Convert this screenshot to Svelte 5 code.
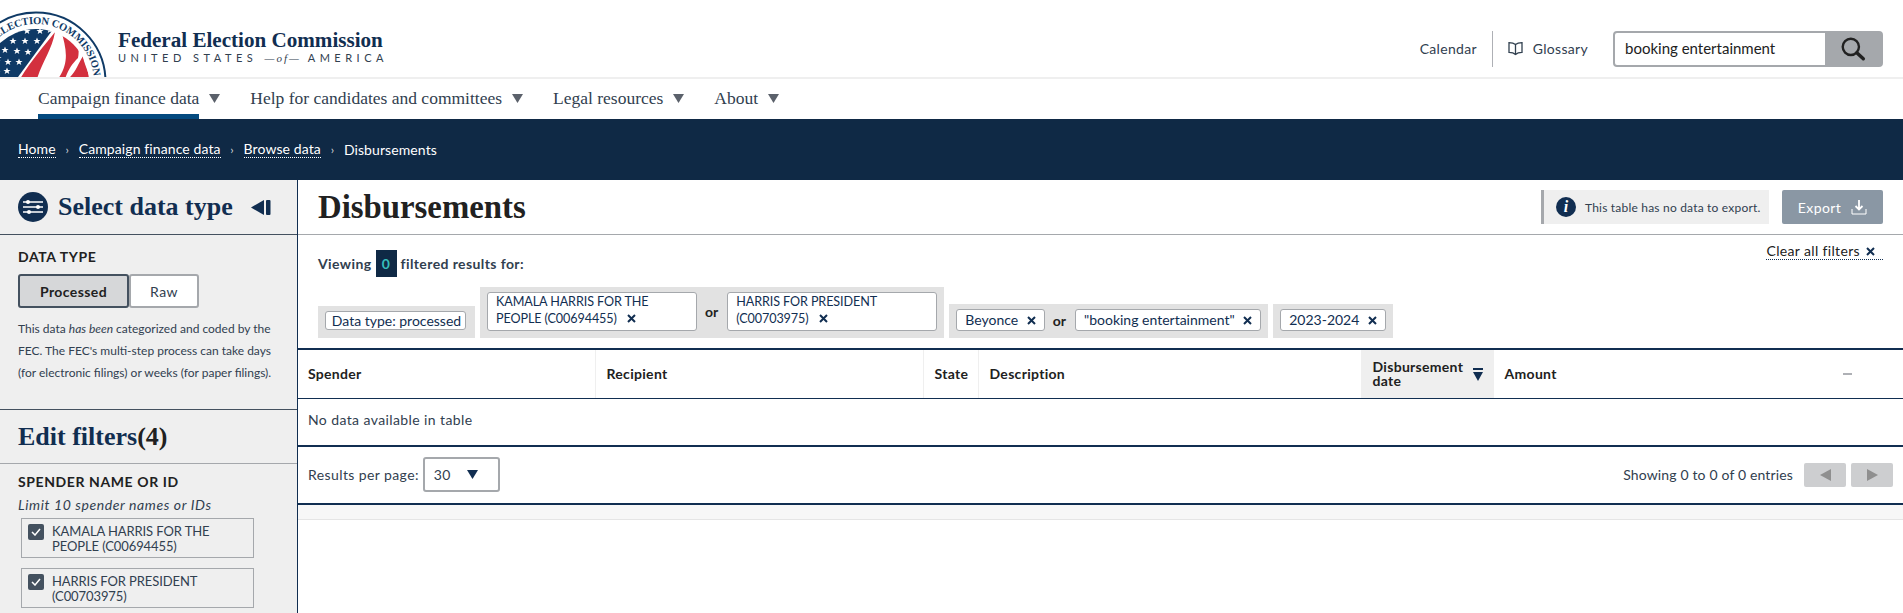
<script lang="ts">
    const navItems = [
        { label: "Campaign finance data", active: true },
        { label: "Help for candidates and committees" },
        { label: "Legal resources" },
        { label: "About" },
    ];

    const crumbs = ["Home", "Campaign finance data", "Browse data"];

    const columns = [
        { label: "Spender", width: 297 },
        { label: "Recipient", width: 328 },
        { label: "State", width: 55 },
        { label: "Description", width: 383 },
        { label: "Disbursement date", width: 132, sorted: true },
        { label: "Amount", width: 410, minus: true },
    ];

    const stars = [
        [27, 31], [40, 31], [13, 41], [25, 41], [37, 41], [5, 50], [17, 51], [28, 52],
        [8, 62], [19, 62], [7, 71], [50, 30], [-2, 58], [-3, 72],
    ];

    const starPath = "M0-3.6 1-1.1 3.6-1.1 1.5.5 2.3 3.1 0 1.6-2.3 3.1-1.5.5-3.6-1.1-1-1.1Z";
</script>

{#snippet closeIcon()}
    <svg class="x" width="9" height="9" viewBox="0 0 9 9" aria-hidden="true">
        <path d="M1 1l7 7M8 1L1 8" stroke="#112e51" stroke-width="2" fill="none" />
    </svg>
{/snippet}

{#snippet caret(cls)}
    <svg class={cls} width="11" height="9" viewBox="0 0 11 9" aria-hidden="true">
        <path d="M0 0h11L5.5 9z" />
    </svg>
{/snippet}

<div class="page">
    <header class="top">
        <svg class="seal" width="107" height="77" viewBox="0 0 107 77" aria-hidden="true">
            <defs>
                <clipPath id="inner"><circle cx="36" cy="82" r="53" /></clipPath>
                <path id="arc" d="M-22 82a58 58 0 0 1 116 0" />
            </defs>
            <circle cx="36" cy="82" r="69.5" fill="#fff" stroke="#0f3a66" stroke-width="2" />
            <text class="seal-text"><textPath href="#arc" startOffset="27%" textLength="127">ELECTION COMMISSION</textPath></text>
            <g clip-path="url(#inner)">
                <rect x="-20" y="25" width="120" height="60" fill="#fff" />
                <path d="M54 28L18 77h-40V28z" fill="#0f3a66" />
                {#each stars as [x, y]}
                    <path d={starPath} transform="translate({x} {y})" fill="#fff" />
                {/each}
                <path d="M55 32C52 50 42 62 37 79H20C30 62 44 46 55 32Z" fill="#d3303e" />
                <path d="M61 30C78 34 80 48 78 58 72 64 68 70 65 79H58C70 62 66 48 61 30Z" fill="#d3303e" />
                <path d="M83 56C84 64 88 70 90 79H68C76 72 78 64 83 56Z" fill="#d3303e" />
            </g>
        </svg>
        <div class="brand">
            <div class="brand-name">Federal Election Commission</div>
            <div class="brand-sub">UNITED STATES <i>—of—</i> AMERICA</div>
        </div>
        <div class="tools">
            <span class="tool cal">Calendar</span>
            <span class="tool gloss">
                <svg width="15" height="15" viewBox="0 0 15 15" aria-hidden="true">
                    <path d="M7.5 3.5C6 2.2 3.5 1.6 1 1.6v9.8c2.500 0 5 .6 6.500 2 1.500-1.400 4-2 6.500-2V1.600c-2.500 0-5 .6-6.500 1.900zM7.500 3.500v9.900" fill="none" stroke="#31404f" stroke-width="1.300" />
                </svg>
                Glossary
            </span>
            <div class="search">
                <span class="search-text">booking entertainment</span>
                <span class="search-btn">
                    <svg width="26" height="26" viewBox="0 0 24 24" aria-hidden="true">
                        <circle cx="10" cy="10" r="7.500" fill="none" stroke="#212121" stroke-width="2.200" />
                        <path d="M15.500 15.500l6 5.500" stroke="#212121" stroke-width="3.200" stroke-linecap="round" />
                    </svg>
                </span>
            </div>
        </div>
    </header>

    <nav class="mainnav">
        {#each navItems as item}
            <span class="nav-item" class:active={item.active}>
                {item.label}
                {@render caret("nav-caret")}
            </span>
        {/each}
    </nav>

    <div class="band">
        {#each crumbs as crumb}
            <span class="crumb">{crumb}</span><span class="sep">›</span>
        {/each}
        <span class="current">Disbursements</span>
    </div>

    <div class="body">
        <aside class="side">
            <div class="side-head">
                <svg class="filter-icon" width="30" height="30" viewBox="0 0 30 30" aria-hidden="true">
                    <circle cx="15" cy="15" r="15" fill="#112e51" />
                    <path d="M5 10h20M5 15h20M5 20h20" stroke="#fff" stroke-width="1.500" />
                    <circle cx="10" cy="10" r="2" fill="#fff" />
                    <circle cx="20" cy="15" r="2" fill="#fff" />
                    <circle cx="11" cy="20" r="2" fill="#fff" />
                </svg>
                <h2 class="side-title">Select data type</h2>
                <svg class="collapse" width="20" height="15" viewBox="0 0 20 15" aria-hidden="true">
                    <path d="M13 0v15L0 7.500z" fill="#112e51" />
                    <rect x="15" y="0" width="4.500" height="15" rx="1" fill="#112e51" />
                </svg>
            </div>
            <div class="side-type">
                <div class="label">DATA TYPE</div>
                <div class="toggle">
                    <span class="toggle-on">Processed</span>
                    <span class="toggle-off">Raw</span>
                </div>
                <p class="type-note">This data <em>has been</em> categorized and coded by the FEC. The FEC's multi-step process can take days (for electronic filings) or weeks (for paper filings).</p>
            </div>
            <div class="edit-head">
                <h2 class="edit-title">Edit filters<span>(4)</span></h2>
            </div>
            <div class="side-filter">
                <div class="label">SPENDER NAME OR ID</div>
                <div class="limit">Limit 10 spender names or IDs</div>
                <label class="check-row">
                    <span class="box">
                        <svg width="10" height="8" viewBox="0 0 10 8" aria-hidden="true"><path d="M1 4l3 3 5-6" fill="none" stroke="#fff" stroke-width="1.500" /></svg>
                    </span>
                    <span>KAMALA HARRIS FOR THE PEOPLE (C00694455)</span>
                </label>
                <label class="check-row">
                    <span class="box">
                        <svg width="10" height="8" viewBox="0 0 10 8" aria-hidden="true"><path d="M1 4l3 3 5-6" fill="none" stroke="#fff" stroke-width="1.500" /></svg>
                    </span>
                    <span>HARRIS FOR PRESIDENT (C00703975)</span>
                </label>
            </div>
        </aside>

        <main class="content">
            <div class="title-row">
                <h1>Disbursements</h1>
                <div class="notice">
                    <span class="info">i</span>
                    This table has no data to export.
                </div>
                <span class="export">
                    Export
                    <svg width="16" height="16" viewBox="0 0 16 16" aria-hidden="true">
                        <path d="M8 1v9M4.500 7L8 10.500 11.500 7" fill="none" stroke="#fff" stroke-width="1.800" />
                        <path d="M1 10v5h14v-5" fill="none" stroke="#fff" stroke-width="1" />
                    </svg>
                </span>
            </div>

            <div class="results">
                <div class="viewing-row">
                    <div class="viewing">Viewing <span class="count">0</span> filtered results for:</div>
                    <span class="clear">Clear all filters {@render closeIcon()}</span>
                </div>
                <div class="tags">
                    <div class="group">
                        <span class="tag small">Data type: processed</span>
                    </div>
                    <div class="group">
                        <span class="tag wide">KAMALA HARRIS FOR THE PEOPLE (C00694455) {@render closeIcon()}</span>
                        <b>or</b>
                        <span class="tag wide">HARRIS FOR PRESIDENT (C00703975) {@render closeIcon()}</span>
                    </div>
                    <div class="group">
                        <span class="tag">Beyonce {@render closeIcon()}</span>
                        <b>or</b>
                        <span class="tag">"booking entertainment" {@render closeIcon()}</span>
                    </div>
                    <div class="group">
                        <span class="tag">2023-2024 {@render closeIcon()}</span>
                    </div>
                </div>
            </div>

            <table class="grid">
                <colgroup>
                    {#each columns as col}
                        <col style="width: {col.width}px" />
                    {/each}
                </colgroup>
                <thead>
                    <tr>
                        {#each columns as col}
                            <th class:sorted={col.sorted}>
                                <span class="th-inner">
                                    <span class="th-label">{col.label}</span>
                                    {#if col.sorted}
                                        <svg width="10" height="13" viewBox="0 0 10 13" aria-hidden="true">
                                            <path d="M0 0h10v2H0zM0 4h10l-5 9z" fill="#112e51" />
                                        </svg>
                                    {/if}
                                    {#if col.minus}
                                        <span class="minus"></span>
                                    {/if}
                                </span>
                            </th>
                        {/each}
                    </tr>
                </thead>
                <tbody>
                    <tr><td colspan="6">No data available in table</td></tr>
                </tbody>
            </table>

            <div class="pager">
                <div class="per-page">
                    Results per page:
                    <span class="select">30 {@render caret("select-caret")}</span>
                </div>
                <div class="entries">
                    Showing 0 to 0 of 0 entries
                    <span class="page-btn"><svg width="11" height="12" viewBox="0 0 11 12" aria-hidden="true"><path d="M11 0v12L0 6z" fill="#8f8f8f" /></svg></span>
                    <span class="page-btn"><svg width="11" height="12" viewBox="0 0 11 12" aria-hidden="true"><path d="M0 0v12l11-6z" fill="#8f8f8f" /></svg></span>
                </div>
            </div>
            <div class="strip"></div>
        </main>
    </div>
</div>

<style>
    :global(body) {
        margin: 0;
        background: #fff;
    }

    .page {
        height: 613px;
        overflow: hidden;
        font-family: Lato, "Liberation Sans", sans-serif;
        font-size: 14px;
        color: #212121;
    }

    .top {
        display: flex;
        height: 77px;
        border-bottom: 2px solid #efefef;
    }

    .seal {
        flex: none;
    }

    .seal-text {
        font-family: "Liberation Serif", serif;
        font-size: 10.5px;
        font-weight: 700;
        fill: #0f3a66;
    }

    .brand {
        margin: 30px 0 0 11px;
        color: #112e51;
    }

    .brand-name {
        font-family: "Liberation Serif", serif;
        font-weight: 700;
        font-size: 21.1px;
        line-height: 20px;
    }

    .brand-sub {
        margin-top: 1px;
        font-size: 11px;
        line-height: 14px;
        letter-spacing: 4.5px;
        color: #31404f;
        white-space: nowrap;
    }

    .brand-sub i {
        font-family: "Liberation Serif", serif;
        letter-spacing: 2px;
    }

    .tools {
        margin-left: auto;
        margin-right: 20px;
        display: flex;
        align-items: center;
        align-self: flex-start;
        margin-top: 31px;
        height: 36px;
    }

    .tool {
        display: flex;
        align-items: center;
        box-sizing: border-box;
        height: 100%;
        padding-bottom: 2px;
        font-size: 14px;
        letter-spacing: 0.3px;
        color: #31404f;
    }

    .cal {
        padding-right: 15px;
        border-right: 1px solid #aeb0b5;
    }

    .gloss {
        padding-left: 15px;
        gap: 10px;
        margin-right: 25px;
    }

    .search {
        display: flex;
        width: 270px;
        height: 36px;
        box-sizing: border-box;
        border: 2px solid #a5a8ac;
        border-radius: 4px;
        background: #fff;
    }

    .search-text {
        flex: 1;
        padding-left: 10px;
        line-height: 31px;
        font-size: 15px;
        color: #212121;
    }

    .search-btn {
        width: 56px;
        background: #a5a8ac;
        display: flex;
        align-items: center;
        justify-content: center;
    }

    .mainnav {
        display: flex;
        height: 40px;
        padding-left: 38px;
        gap: 30px;
        box-sizing: border-box;
    }

    .nav-item {
        display: flex;
        gap: 10px;
        align-items: center;
        position: relative;
        padding-bottom: 2px;
        box-sizing: border-box;
        font-family: "Liberation Serif", serif;
        font-size: 17.5px;
        color: #31404f;
    }

    .nav-item.active::after {
        content: "";
        position: absolute;
        left: 0;
        right: 21px;
        bottom: 0;
        height: 5px;
        background: #044a7f;
    }

    :global(.nav-caret) {
        fill: #5b616b;
    }

    .band {
        height: 61px;
        background: #0f2945;
        display: flex;
        align-items: center;
        padding-left: 18px;
        color: #fff;
        letter-spacing: 0.1px;
    }

    .crumb {
        border-bottom: 1px dotted #fff;
        line-height: 16px;
    }

    .sep {
        width: 23px;
        text-align: center;
        font-size: 12px;
        color: #d6d7d9;
    }

    .current {
        padding-bottom: 1px;
    }

    .body {
        display: grid;
        grid-template-columns: 298px 1fr;
    }

    .side {
        height: 433px;
        box-sizing: border-box;
        background: #efefef;
        border-right: 1px solid #112e51;
    }

    .side-head {
        display: flex;
        align-items: center;
        height: 54px;
        padding: 0 26px 0 18px;
        border-bottom: 1px solid #44515f;
    }

    .side-title {
        margin: 0 0 0 10px;
        font-family: "Liberation Serif", serif;
        font-size: 26px;
        color: #112e51;
        white-space: nowrap;
    }

    .collapse {
        margin-left: auto;
    }

    .side-type {
        height: 175px;
        box-sizing: border-box;
        padding: 13px 18px 0;
        border-bottom: 1px solid #44515f;
    }

    .label {
        font-weight: 700;
        font-size: 14px;
        line-height: 18px;
        letter-spacing: 0.6px;
        color: #212121;
    }

    .toggle {
        display: flex;
        margin-top: 8px;
        height: 34px;
        width: 181px;
    }

    .toggle span {
        display: flex;
        align-items: center;
        justify-content: center;
        box-sizing: border-box;
        border-radius: 3px;
        letter-spacing: 0.4px;
    }

    .toggle-on {
        width: 111px;
        background: #d6d7d9;
        border: 2px solid #44515f;
        font-weight: 700;
    }

    .toggle-off {
        width: 70px;
        background: #fff;
        border: 2px solid #a5a8ac;
        color: #31404f;
    }

    .type-note {
        margin: 10px 0 0;
        width: 262px;
        font-size: 12px;
        line-height: 22px;
        color: #31404f;
    }

    .edit-head {
        height: 54px;
        box-sizing: border-box;
        padding: 12px 18px 0;
        border-bottom: 1px solid #a5a8ac;
    }

    .edit-title {
        margin: 0;
        font-family: "Liberation Serif", serif;
        font-size: 26px;
        line-height: 30px;
        color: #112e51;
    }

    .edit-title span {
        color: #212121;
    }

    .side-filter {
        padding: 9px 18px 0;
    }

    .limit {
        margin-top: 5px;
        font-style: italic;
        line-height: 18px;
        letter-spacing: 0.6px;
        color: #31404f;
    }

    .check-row {
        display: flex;
        gap: 8px;
        box-sizing: border-box;
        margin: 4px 0 10px 3px;
        width: 233px;
        height: 40px;
        padding: 5px 6px;
        border: 1px solid #a5a8ac;
        font-size: 13px;
        line-height: 15px;
        letter-spacing: -0.1px;
        color: #31404f;
    }

    .check-row + .check-row {
        margin-top: 10px;
    }

    .box {
        flex: none;
        width: 16px;
        height: 16px;
        border-radius: 2px;
        background: #44515f;
        display: flex;
        align-items: center;
        justify-content: center;
    }

    .title-row {
        display: flex;
        align-items: center;
        height: 54px;
        padding: 0 20px;
        border-bottom: 1px solid #a5a8ac;
    }

    h1 {
        margin: 0;
        font-family: "Liberation Serif", serif;
        font-size: 32.8px;
        font-weight: 700;
        color: #212121;
    }

    .notice {
        margin-left: auto;
        display: flex;
        align-items: center;
        gap: 9px;
        box-sizing: border-box;
        width: 228px;
        height: 34px;
        padding-left: 12px;
        background: #efefef;
        border-left: 3px solid #a5a8ac;
        font-size: 12px;
        letter-spacing: 0.2px;
        color: #31404f;
    }

    .info {
        flex: none;
        width: 20px;
        height: 20px;
        border-radius: 50%;
        background: #112e51;
        color: #fff;
        font-family: "Liberation Serif", serif;
        font-style: italic;
        font-weight: 700;
        font-size: 16px;
        line-height: 20px;
        text-align: center;
    }

    .export {
        margin-left: 13px;
        display: flex;
        align-items: center;
        justify-content: center;
        gap: 10px;
        width: 101px;
        height: 34px;
        background: #8a97a4;
        border-radius: 2px;
        color: #fff;
        letter-spacing: 0.4px;
    }

    .results {
        height: 113px;
        box-sizing: border-box;
        padding: 15px 20px 10px;
    }

    .viewing-row {
        display: flex;
        justify-content: space-between;
        height: 27px;
    }

    .viewing {
        display: flex;
        align-items: center;
        gap: 4px;
        font-weight: 700;
        letter-spacing: 0.4px;
        color: #31404f;
    }

    .count {
        width: 21px;
        height: 27px;
        background: #0f2945;
        color: #36bdbb;
        line-height: 27px;
        text-align: center;
    }

    .clear {
        align-self: flex-start;
        margin-top: -7px;
        padding-right: 8px;
        display: flex;
        align-items: center;
        gap: 6px;
        height: 16px;
        line-height: 16px;
        border-bottom: 1px dotted #112e51;
        color: #212121;
        letter-spacing: 0.35px;
    }

    .tags {
        margin-top: 10px;
        display: flex;
        align-items: flex-end;
        gap: 5px;
    }

    .group {
        display: flex;
        align-items: center;
        gap: 8px;
        padding: 5px 7px 7px;
        background: #e2e2e2;
    }

    .group b {
        color: #212121;
        font-size: 14px;
        margin-right: 1px;
    }

    .tag {
        box-sizing: border-box;
        display: inline-block;
        height: 22px;
        padding: 0 8px;
        background: #fff;
        border: 1px solid #a5a8ac;
        border-radius: 3px;
        color: #112e51;
        font-size: 14px;
        line-height: 20px;
        white-space: nowrap;
    }

    .tag.small {
        height: 19px;
        line-height: 17px;
        width: 141px;
        margin: 0 2px 1px 0;
        text-align: center;
        padding: 0 0 0 2px;
    }

    .tag.wide {
        white-space: normal;
        width: 210px;
        height: 39px;
        font-size: 12.6px;
        letter-spacing: -0.1px;
        line-height: 17px;
        padding: 0 8px;
    }

    :global(.x) {
        margin-left: 5px;
    }

    .tag.wide :global(.x) {
        margin-left: 7px;
    }

    .clear :global(.x) {
        margin-left: 0;
    }

    .grid {
        width: 100%;
        table-layout: fixed;
        border-collapse: collapse;
        border-top: 2px solid #112e51;
    }

    th {
        height: 48px;
        padding: 0 10px 0 11px;
        border-bottom: 1px solid #112e51;
        border-left: 1px solid #efefef;
        text-align: left;
        font-size: 14px;
        line-height: 14px;
        letter-spacing: 0.3px;
        color: #212121;
    }

    th:first-child {
        border-left: 0;
        padding-left: 10px;
    }

    th.sorted {
        background: #efefef;
    }

    .th-inner {
        display: flex;
        align-items: center;
        justify-content: space-between;
    }

    .th-label {
        max-width: 98px;
    }

    .minus {
        width: 9px;
        height: 2px;
        margin-right: 41px;
        background: #aeb0b5;
    }

    td {
        height: 46px;
        padding: 0 10px 4px;
        box-sizing: border-box;
        color: #31404f;
        letter-spacing: 0.4px;
    }

    .pager {
        display: flex;
        justify-content: space-between;
        align-items: center;
        height: 56px;
        padding: 0 10px;
        border-top: 2px solid #112e51;
        border-bottom: 2px solid #112e51;
        color: #31404f;
        letter-spacing: 0.4px;
    }

    .per-page {
        display: flex;
        align-items: center;
        gap: 4px;
    }

    .select {
        display: flex;
        align-items: center;
        gap: 16px;
        box-sizing: border-box;
        width: 77px;
        height: 35px;
        padding-left: 9px;
        border: 2px solid #a5a8ac;
        border-radius: 3px;
        background: #fff;
    }

    :global(.select-caret) {
        fill: #112e51;
    }

    .entries {
        display: flex;
        align-items: center;
        gap: 5px;
        letter-spacing: 0.15px;
    }

    .page-btn {
        display: flex;
        align-items: center;
        justify-content: center;
        width: 42px;
        height: 24px;
        background: #cdced0;
        border-radius: 2px;
    }

    .entries .page-btn:first-of-type {
        margin-left: 6px;
    }

    .strip {
        height: 14px;
        background: #f7f7f7;
        border-bottom: 1px solid #e5e5e5;
    }
</style>
